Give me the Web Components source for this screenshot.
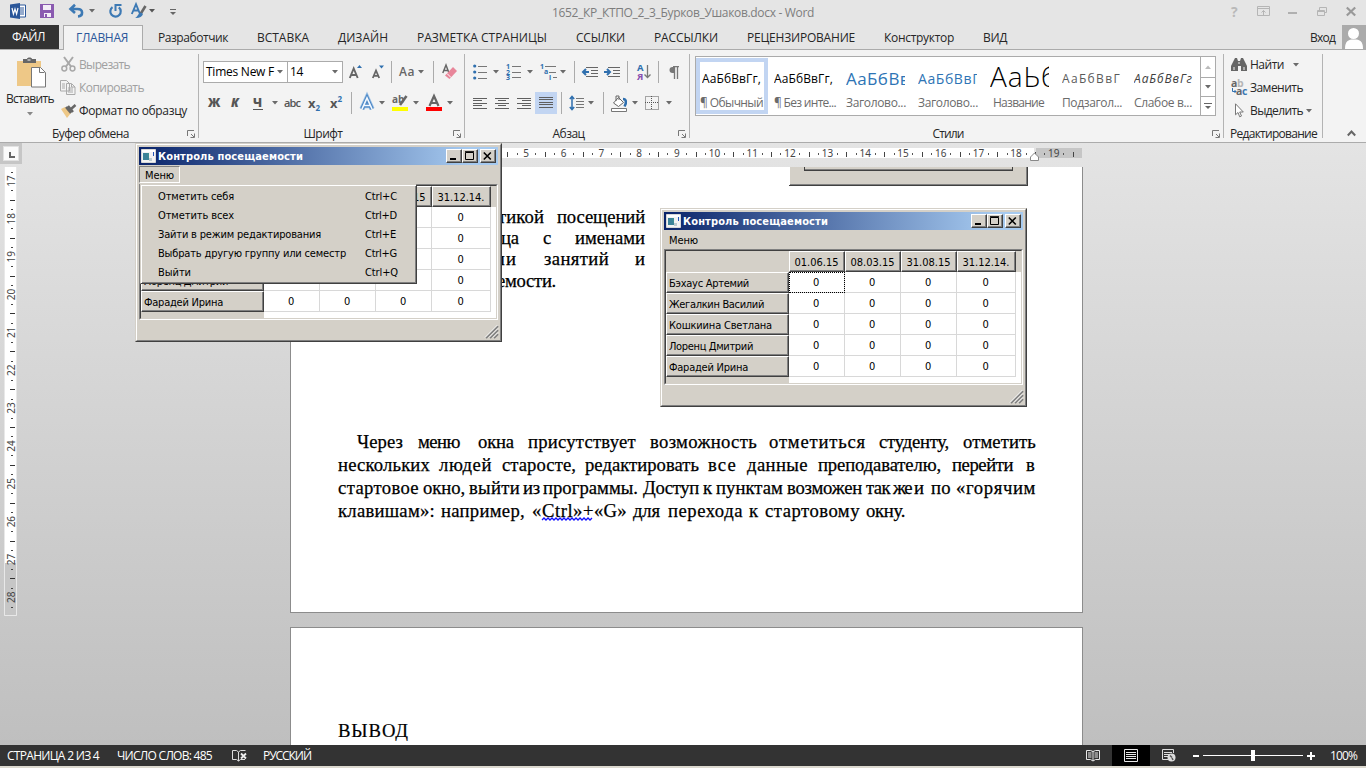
<!DOCTYPE html>
<html lang="ru">
<head>
<meta charset="utf-8">
<title>Word</title>
<style>
html,body{margin:0;height:100%;overflow:hidden}
body{font-family:"Open Sans","Noto Sans",sans-serif;font-size:12px;color:#262626}
</style>
</head>
<body>
<word-app></word-app>
<script>
const define=(name,css,html,after)=>customElements.define(name,class extends HTMLElement{
  connectedCallback(){
    if(this.shadowRoot)return;
    const root=this.attachShadow({mode:'open'});
    root.innerHTML=`<style>*{box-sizing:border-box}svg{display:block;overflow:visible}${css}</style>${typeof html==='function'?html(this):html}`;
    if(after)after(this,root);
  }
});

/* text spread over a given width by letter spacing */
define('fit-text',`:host{display:block;white-space:pre;line-height:16px;flex:none}span{display:inline-block}`,
  '<span><slot></slot></span>',
  (el,root)=>{
    const w=+el.getAttribute('w'),s=root.querySelector('span');
    const nat=s.getBoundingClientRect().width,n=el.textContent.length;
    el.style.width=w+'px';
    if(n)s.style.letterSpacing=((w-nat)/n).toFixed(3)+'px';
  });
const T=(t,w,css='')=>`<fit-text w="${w}" style="${css}">${t}</fit-text>`;

/* one row of items: [start, width, markup], gaps become margins */
const row=(x0,h,items,css='')=>{
  let x=x0,out='';
  for(const [s,w,m] of items){out+=`<div style="flex:none;margin-left:${s-x}px;width:${w}px">${m}</div>`;x=s+w;}
  return `<div style="display:flex;align-items:center;height:${h}px;${css}">${out}</div>`;
};
const svg=(w,h,b)=>`<svg width="${w}" height="${h}" viewBox="0 0 ${w} ${h}" fill="none">${b}</svg>`;
const arr=(c='#6a6a6a')=>svg(6,4,`<path d="M0 0h6L3 3.5z" fill="${c}"/>`);
const sep=svg(1,22,'<path d="M.5 0v22" stroke="#ababab"/>');
const launcher=svg(8,8,'<path d="M.5 6V.5H7M4 4l3 3M7.500 3.500v4h-4" stroke="#777"/>');

/* title bar */
define('word-titlebar',`:host{display:block;height:25px;background:#e5e5e5}.u{margin-top:-3px}`,()=>row(0,25,[
 [10,16,`<div class="u">${svg(16,16,'<path d="M8 2h7.500v12H8" fill="#fff" stroke="#2b579a"/><path d="M10 5h4M10 7h4M10 9h4M10 11h4" stroke="#2b579a"/><path d="M0 1.500L10 0v16L0 14.500z" fill="#2b579a"/><path d="M2 5l1.400 6L5 6l1.600 5L8 5" stroke="#fff" stroke-width="1.200"/>')}</div>`],
 [40,14,`<div class="u">${svg(14,14,'<path d="M0 0h14v14H0z" fill="#8a5ab0"/><path d="M3 1h8v5H3zM4 9h7v4H4z" fill="#f3edf7"/><path d="M5 10h2v3H5z" fill="#8a5ab0"/>')}</div>`],
 [69,15,`<div class="u">${svg(15,14,'<path d="M6 .8L1.500 5l4.500 4M2 5h6.500c6 0 6 7 .5 7.500" stroke="#3c79b4" stroke-width="2.600"/>')}</div>`],
 [89,6,`<div class="u">${arr()}</div>`],
 [109,13,`<div class="u">${svg(13,14,'<path d="M3.500 3.200A5.200 5.200 0 1 0 9.800 3.400" stroke="#3c79b4" stroke-width="2.200"/><path d="M6.500 7V1h6" stroke="#3c79b4" stroke-width="2"/>')}</div>`],
 [131,16,`<div class="u">${svg(16,16,'<path d="M.8 11L5 1.200 9 11M2.500 7.500h5" stroke="#3c79b4" stroke-width="1.900"/><path d="M14.500 3l-5 8" stroke="#666" stroke-width="2.600"/><path d="M10 9.500l2 1.500c-1 3-4 4.500-8 4 3-1 2.500-4.500 6-5.500z" fill="#3c79b4"/>')}</div>`],
 [149,6,`<div class="u">${arr('#555')}</div>`],
 [170,6,svg(6,7,'<path d="M0 .5h6" stroke="#666"/><path d="M0 3h6L3 6z" fill="#666"/>')],
 [552,262,T('1652_КР_КТПО_2_3_Бурков_Ушаков.docx - Word',262,'color:#7d7d7d;margin-top:1px')],
 [1231,8,'<b style="display:block;margin-top:-2px;color:#b9b9b9;font:bold 14px/14px Open Sans">?</b>'],
 [1257,13,`<div class="u">${svg(13,10,'<path d="M.5.500h12v9H.5zM.5 2.500h12M6.500 9V4.500M4.500 6.500l2-2 2 2" stroke="#b5b5b5"/>')}</div>`],
 [1288,9,svg(9,4,'<path d="M0 2h9" stroke="#b0b0b0" stroke-width="2"/>')],
 [1317,10,`<div class="u">${svg(10,9,'<path d="M2.500 3V.500h7v5H7.500M.5 3.500h7v5h-7zM.5 4.500h7" stroke="#b5b5b5"/>')}</div>`],
 [1346,10,`<div class="u">${svg(10,9,'<path d="M.8.500l8.400 8M9.200.500L.8 8.500" stroke="#999" stroke-width="2.200"/>')}</div>`]
]));

/* ribbon tabs */
define('word-tabs',`:host{display:block;height:25px;background:#e5e5e5;box-shadow:inset 0 -1px #ababab}
.f{background:#333;color:#fff;height:24px;padding:4px 0 0 12px}
.a{background:#f3f3f3;border:1px solid #ababab;border-bottom:0;height:25px;padding:4px 0 0 12px;color:#2b579a}
.p{background:#ababab;height:24px;overflow:hidden}.t{padding-top:5px}`,()=>row(0,25,[
 [0,59,`<div class="f">${T('ФАЙЛ',33)}</div>`],
 [63,80,`<div class="a">${T('ГЛАВНАЯ',52)}</div>`],
 ...[[158,70,'Разработчик'],[257,52,'ВСТАВКА'],[338,50,'ДИЗАЙН'],[417,130,'РАЗМЕТКА СТРАНИЦЫ'],[576,49,'ССЫЛКИ'],[654,64,'РАССЫЛКИ'],
 [747,108,'РЕЦЕНЗИРОВАНИЕ'],[884,70,'Конструктор'],[983,24,'ВИД'],[1310,25,'Вход']].map(([x,w,t])=>[x,w,`<div class="t">${T(t,w)}</div>`]),
 [1342,24,`<div class="p">${svg(24,24,'<circle cx="11.500" cy="8.500" r="5.500" fill="#fff"/><path d="M3 24c0-8 3-9.500 9-9.500s9 1.500 9 9.500z" fill="#fff"/>')}</div>`]
],'align-items:flex-start'));

/* ribbon group with a caption and a divider */
define('ribbon-group',`:host{display:flex;flex-direction:column;flex:none;height:92px;position:relative;width:var(--w)}
:host::after{content:"";position:absolute;right:0;top:4px;height:84px;width:1px;background:#b3b3b3}
.b{height:75px}.c{display:flex;align-items:center;justify-content:center;height:17px;position:relative;padding-right:18px}
:host([wide]) .c{padding:0}
.l{position:absolute;right:4px;top:5px}`,
 el=>`<div class="b"><slot></slot></div><div class="c">${T(el.getAttribute('label'),el.getAttribute('lw'))}${el.hasAttribute('dlg')?`<div class="l">${launcher}</div>`:''}</div>`);

/* clipboard */
define('clipboard-tools',`:host{display:flex}.big{width:60px;display:flex;flex-direction:column;align-items:center}.s{flex:1;padding-top:3px}`,()=>`
<div class="big"><div style="height:7px"></div>${svg(30,31,'<path d="M2 4h24v25H2z" fill="#eec887"/><path d="M8 6V2h4c0-2 5-2 5 0h4v4z" fill="#666"/><path d="M12.500 3h3" stroke="#fff"/><path d="M16.500 10.500h9l5 5v14.500h-14z" fill="#fff" stroke="#777"/><path d="M24.500 10.500v5h5" stroke="#777"/>')}
<div style="height:3px"></div>${T('Вставить',48)}<div style="height:5px"></div>${arr('#888')}</div>
<div class="s">
${row(60,23,[[61,15,svg(15,15,'<path d="M3 0l7 9.500M12 0L5 9.500" stroke="#a8a8a8" stroke-width="2"/><circle cx="3.300" cy="11.500" r="2.400" stroke="#a8a8a8" stroke-width="1.500"/><circle cx="11.500" cy="11.500" r="2.400" stroke="#a8a8a8" stroke-width="1.500"/>')],[79,51,T('Вырезать',51,'color:#a0a0a0')]])}
${row(60,23,[[60,16,svg(16,15,'<path d="M.5.500h6l3 3V11h-9zM6.500 3.500h5l3.500 3.500v7.500H6.500z" fill="#f3f3f3" stroke="#aaa"/><path d="M2 4h3M2 6h3M2 8h3M8 8h5M8 10h5M8 12h5M11.500 4v3H15" stroke="#aaa"/>')],[79,65,T('Копировать',65,'color:#a0a0a0')]])}
${row(60,23,[[60,17,svg(17,14,'<path d="M1 5l4-2 6 6-4 5z" fill="#eec887"/><path d="M6 3l5 6M8 2l5 6" stroke="#666" stroke-width="2.500"/><path d="M11 5l4.500-4" stroke="#666" stroke-width="2.500"/>')],[79,108,T('Формат по образцу',108)]])}
</div>`);

/* font */
define('font-tools',`:host{display:block;padding-top:11px}.c{height:22px;border:1px solid #ababab;background:#fff;display:flex;align-items:center;justify-content:space-between;padding:0 4px 0 2px;color:#000}
.g{font-weight:bold;color:#555;line-height:18px;font-size:13px}`,()=>
row(199,22,[
 [203,85,`<div class="c">${T('Times New F',68)}${arr()}</div>`],
 [287,56,`<div class="c">${T('14',13)}${arr()}</div>`],
 [349,14,svg(14,14,'<path d="M.8 13L4.700 3.500l4 9.500M2 10h5.500" stroke="#666" stroke-width="1.900"/><path d="M8 3h5l-2.500-3z" fill="#2f6fae"/>')],
 [372,13,svg(13,14,'<path d="M.8 13L4 5.500 7.200 13M2 10.800h4" stroke="#666" stroke-width="1.800"/><path d="M7 .5h5L9.500 3.500z" fill="#2f6fae"/>')],
 [391,1,sep],[399,16,T('Aa',16,'color:#666;font-weight:600')],[418,6,arr()],[433,1,sep],
 [442,16,svg(16,16,'<path d="M.8 9L4 1l3 8M2 6.500h3.500" stroke="#666" stroke-width="1.500"/><path d="M3 11.500L11 3l4 4-7.500 8z" fill="#e8869a"/><path d="M5 9.500l4 4" stroke="#fff"/>')]
])+'<div style="height:9px"></div>'+row(199,22,[
 [208,13,T('Ж',13,'font-weight:800;color:#555')],[231,9,T('К',9,'font-weight:800;font-style:italic;color:#555')],
 [253,10,T('Ч',10,'font-weight:800;color:#555;border-bottom:1px solid #555;line-height:13px')],[272,5,arr()],
 [284,16,T('abc',16,'font-weight:600;color:#555;text-decoration:line-through;font-size:11px')],
 [308,14,'<span class="g">x</span><span style="color:#2f6fae;font:bold 8px/8px Open Sans;vertical-align:-3px">2</span>'],
 [330,14,'<span class="g">x</span><span style="color:#2f6fae;font:bold 8px/8px Open Sans;vertical-align:6px">2</span>'],
 [351,1,sep],
 [360,14,svg(14,15,'<path d="M2 13L7 2l5 11M4 9.500h6" stroke="#9cc0e4" stroke-width="5.400"/><path d="M2 13L7 2l5 11M4 9.500h6" stroke="#4a86c5" stroke-width="3.800"/><path d="M2 13L7 2l5 11M4 9.500h6" stroke="#f2f8ff" stroke-width="1.700"/>')],[379,5,arr()],
 [392,17,svg(17,18,'<text x="0" y="9" font-family="Open Sans" font-size="10" font-weight="700" fill="#666">ab</text><path d="M14.500 2L8 11" stroke="#666" stroke-width="2.600"/><path d="M0 13h16v4H0z" fill="#ff0"/>')],[413,6,arr()],
 [426,16,svg(16,18,'<path d="M3.500 12L8 2l4.500 10M5 9h6" stroke="#666" stroke-width="2.200"/><path d="M0 13h16v4H0z" fill="#f00"/>')],[447,6,arr()]
]));

const al=a=>svg(14,13,a.map(([x,w],i)=>`<rect x="${x}" y="${i*2.5+1|0}" width="${w}" height="1" fill="#5f5f5f"/>`).join(''));
const ind=d=>svg(16,11,`<path d="M4 .5h12M9 3.500h7M9 6.500h7M4 9.500h12" stroke="#666"/><path d="${d?'M0 5h6M3 2l3 3-3 3':'M7 5H1M4 2L1 5l3 3'}" stroke="#2f6fae" stroke-width="2"/>`);
define('paragraph-tools',`:host{display:block;padding-top:11px}.j{background:#c2d5f2;height:22px;padding:4px 4px}`,()=>
row(465,22,[
 [473,14,svg(14,16,'<g fill="#2f6fae"><circle cx="1.700" cy="2" r="1.600"/><circle cx="1.700" cy="8" r="1.600"/><circle cx="1.700" cy="14" r="1.600"/></g><path d="M5 2.500h9M5 8.500h9M5 14.500h9" stroke="#777"/>')],[493,6,arr()],
 [506,15,svg(15,16,'<g fill="#2f6fae" font-family="Open Sans" font-size="7" font-weight="700"><text x="0" y="5">1</text><text x="0" y="10.500">2</text><text x="0" y="16">3</text></g><path d="M6 2.500h9M6 8.500h9M6 13.500h9" stroke="#777"/>')],[527,6,arr()],
 [540,17,svg(17,16,'<g fill="#2f6fae" font-family="Open Sans" font-size="7" font-weight="700"><text x="0" y="5">1</text><text x="4" y="10">a</text><text x="9" y="16">i</text></g><path d="M5 2.500h11M9 8.500h7M13 13.500h4" stroke="#777"/>')],[560,6,arr()],
 [574,1,sep],[582,16,ind(0)],[604,16,ind(1)],[627,1,sep],
 [637,14,svg(14,16,'<g font-family="Open Sans" font-size="9.500" font-weight="700"><text x="0" y="7" fill="#2f6fae">А</text><text x="0" y="15.500" fill="#8a4fb0">Я</text></g><path d="M10.500 1v12M7.500 10.500l3 3 3-3" stroke="#777" stroke-width="1.300"/>')],
 [658,1,sep],[669,10,svg(10,13,'<path d="M5 1H3.500a3 3 0 0 0 0 6H5z" fill="#777"/><path d="M5.500 13V.7M8.500 13V.7M4 .7h6" stroke="#777" stroke-width="1.300"/>')]
])+'<div style="height:9px"></div>'+row(465,22,[
 [473,14,al([[0,14],[0,9],[0,14],[0,9],[0,14]].slice(0,5))],
 [495,14,al([[0,14],[3,8],[0,14],[3,8],[0,14]])],
 [517,14,al([[0,14],[5,9],[0,14],[5,9],[0,14]])],
 [535,22,`<div class="j">${al([[0,14],[0,14],[0,14],[0,14],[0,14]])}</div>`],
 [561,1,sep],
 [569,15,svg(15,16,'<path d="M3 1v14M.8 4L3 1.500 5.200 4M.8 12L3 14.500 5.200 12" stroke="#2f6fae" stroke-width="1.500"/><path d="M7 3.500h8M7 6.500h8M7 9.500h8M7 12.500h8" stroke="#777"/>')],[588,6,arr()],
 [603,1,sep],
 [611,17,svg(17,17,'<path d="M2.500 8l5-5.500 5 5-5 4z" fill="#fff" stroke="#666"/><path d="M5 6V1h3v4" stroke="#666"/><path d="M12 4c3 0 4 3 1.500 7.500" stroke="#2f6fae" stroke-width="2.500"/><path d="M.5 13.500h15v3H.5z" fill="#fff" stroke="#777"/>')],[632,6,arr()],
 [645,14,svg(14,14,'<path d="M.5.500h13v13H.5zM6.500 0v14M0 6.500h14" stroke="#555" stroke-dasharray="1 1"/>')],[666,6,arr()]
]));

/* style gallery */
const styles=[
 ['АаБбВвГг,','font-size:12px;color:#000',59,'¶ Обычный',63],
 ['АаБбВвГг,','font-size:12px;color:#000',59,'¶ Без инте...',62],
 ['АаБбВв','font-size:17px;color:#2e74b5',64,'Заголово...',60],
 ['АаБбВвГ','font-size:14px;color:#2e74b5',62,'Заголово...',60],
 ['АаЬб','font:300 28px/30px Open Sans;color:#000;margin-top:-7px',68,'Название',51],
 ['АаБбВвГ','font-size:12px;color:#5a5a5a',59,'Подзагол...',60],
 ['АаБбВвГг','font-size:12px;font-style:italic;color:#404040',59,'Слабое в...',58]];
define('style-gallery',`:host{display:flex;margin:6px 0 0 5px;width:521px;height:60px;background:#fff;border:1px solid #ababab}
.i{width:72px;height:56px;margin-top:1px;padding:5px 0 0 6px;flex:none}.i.s{border:4px solid #c2d5f2;padding:1px 0 0 2px}
.t{width:59px;height:32px;overflow:hidden;display:flex;align-items:center}.n{color:#6b6b6b;height:18px}
.u{margin-left:auto;width:15px;border-left:1px solid #ababab;display:grid;grid-template-rows:20px 19px 1fr}.u div{display:grid;place-items:center}.u div+div{border-top:1px solid #ababab}`,
()=>styles.map(([s,c,w,n,nw],i)=>`<div class="i${i?'':' s'}"><div class="t">${T(s,w,c)}</div><div class="n" style="${i==4?'padding-left:3px':i?'':'margin-left:-2px'}">${T(n,nw)}</div></div>`).join('')+
`<div class="u"><div>${svg(6,4,'<path d="M0 4h6L3 .5z" fill="#bbb"/>')}</div><div>${arr()}</div><div>${svg(8,7,'<path d="M0 .5h8" stroke="#666"/><path d="M1 3h6L4 6z" fill="#666"/>')}</div></div>`);

define('edit-tools',`:host{display:block;padding-top:3px}`,()=>
row(1224,23,[[1231,16,svg(16,13,'<path d="M2 4l2-4h2l1 3h2l1-3h2l2 4 2 4v5h-6V8H7v5H0V8z" fill="#666"/><path d="M3 9v3M13 9v3M8 4v2" stroke="#f3f3f3"/>')],[1250,34,T('Найти',34)],[1293,6,arr()]])+
row(1224,23,[[1231,17,svg(17,17,'<g font-family="Open Sans" font-size="10.500" font-weight="700"><text x="0" y="7.500" fill="#666">a</text><text x="6" y="7.500" fill="#b5b5b5">b</text><text x="5" y="16" fill="#666">a</text><text x="11" y="16" fill="#3c79b4">c</text></g><path d="M1.500 9v3.500H5M3.500 11L5 12.500 3.500 14" stroke="#2f6fae"/>')],[1250,53,T('Заменить',53)]])+
row(1224,23,[[1235,9,svg(9,15,'<path d="M.5.800v11l2.500-2.300 1.700 4.300 1.800-.8-1.800-4H8.300z" fill="#fff" stroke="#777"/>')],[1250,53,T('Выделить',53)],[1306,5,arr()]]));

define('word-ribbon',`:host{display:flex;height:93px;background:#f3f3f3;border-bottom:1px solid #ababab;box-sizing:border-box}.x{margin:80px 0 0 24px}`,
`<ribbon-group label="Буфер обмена" lw="77" dlg style="--w:199px"><clipboard-tools></clipboard-tools></ribbon-group>
<ribbon-group label="Шрифт" lw="39" dlg style="--w:266px"><font-tools></font-tools></ribbon-group>
<ribbon-group label="Абзац" lw="32" dlg style="--w:225px"><paragraph-tools></paragraph-tools></ribbon-group>
<ribbon-group label="Стили" lw="31" dlg style="--w:534px"><style-gallery></style-gallery></ribbon-group>
<ribbon-group wide label="Редактирование" lw="87" style="--w:99px"><edit-tools></edit-tools></ribbon-group>
<div class="x">${svg(9,7,'<path d="M.8 5.500l3.700-4 3.700 4" stroke="#666" stroke-width="2"/>')}</div>`);

/* rulers, one centimetre = 37.75 px */
define('h-ruler',`:host{display:block}text{font:10px "Noto Sans",sans-serif;fill:#444}`,()=>{
 let o='';
 for(let n=0;n<20;n++){const x=n*37.7-.5;if(n)o+=`<text x="${x}" y="9" text-anchor="middle">${n}</text>`;
  for(const q of [.25,.75]){const p=Math.round(x+q*37.7);if(p<744)o+=`<rect x="${p}" y="5" width="1" height="2" fill="#555"/>`;}
  const m=Math.round(x+18.85);if(m<744)o+=`<rect x="${m}" y="4" width="1" height="5" fill="#444"/>`;}
 return svg(744,16,'<path d="M0 0h696v10H0z" fill="#fff"/><path d="M698 0h46v10h-46z" fill="#c6c6c6"/>'+o+'<path d="M692.500 12.500V9l4-4 4 4v3.500z" fill="#fff" stroke="#888"/>');
});
define('v-ruler',`:host{display:block}text{font:10px "Noto Sans",sans-serif;fill:#444}`,()=>{
 let o='';
 for(let n=17;n<29;n++){const y=14+(n-17)*37.85;o+=`<text transform="translate(11 ${y}) rotate(-90)" text-anchor="middle">${n}</text>`;
  for(const q of [-.25,.25])o+=`<rect x="7" y="${Math.round(y+q*37.85)}" width="2" height="1" fill="#444"/>`;
  if(n<28)o+=`<rect x="6" y="${Math.round(y+18.900)}" width="5" height="1" fill="#333"/>`;}
 return svg(13,449,'<path d="M.5 0v448.500h12V0" fill="#fff" stroke="#e8e8e8"/><path d="M1 396h11v52H1z" fill="#c6c6c6"/>'+o);
});

/* attendance window */
const names=['Бэхаус Артемий','Жегалкин Василий','Кошкиина Светлана','Лоренц Дмитрий','Фарадей Ирина'];
const nw=[80,95,103,84,79];
const dates=[['01.06.15',44,56],['08.03.15',44,56],['31.08.15',44,56],['31.12.14.',47,59]];
define('attendance-window',`:host{display:block;box-sizing:border-box;width:367px;height:199px;background:#d4d0c8;border:1px solid;border-color:#d4d0c8 #404040 #404040 #d4d0c8;color:#000;font:11px "DejaVu Sans Condensed","DejaVu Sans",sans-serif;font-stretch:condensed;position:relative}
.in{height:197px;border:1px solid;border-color:#fff #808080 #808080 #fff;padding:2px;display:flex;flex-direction:column}
.t{height:18px;flex:none;display:flex;align-items:center;background:linear-gradient(90deg,#0a246a,#a6caf0 92%);color:#fff;font-weight:bold;padding:0 2px}
.t fit-text{margin:1px 0 0 2px}.w{margin-left:auto;display:flex}
.b{width:16px;height:14px;background:#d4d0c8;border:1px solid;border-color:#fff #404040 #404040 #fff;box-shadow:inset -1px -1px #808080;display:grid;place-items:center}.b:last-child{margin-left:2px}
.b svg{margin:-1px 0 0 -1px}
.m{height:19px;flex:none;display:flex;padding:1px 0 0 1px}.m div{width:41px;height:17px;padding:2px 0 0 4px}
:host([open]) .m{padding-left:0}:host([open]) .m div{border:1px solid;border-color:#808080 #fff #fff #808080;padding:1px 0 0 5px}
.f{height:136px;flex:none;border:1px solid;border-color:#808080 #fff #fff #808080;}
.g{height:134px;border:1px solid;border-color:#404040 #d4d0c8 #d4d0c8 #404040;display:grid;grid-template-columns:123px 56px 56px 56px 59px 1fr;grid-template-rows:21px 21px 21px 21px 21px 21px 1fr}
.g>div{display:flex;align-items:center;justify-content:center;padding:2px 1px 0 0}
.h{background:#d4d0c8;border:1px solid;border-color:#fff #404040 #404040 #fff;box-shadow:inset -1px -1px #808080}
.g>.n{justify-content:flex-start;padding-left:2px}.c{background:#fff;border-right:1px solid #d8d8d8;border-bottom:1px solid #d8d8d8}
.g>.e{background:#fff}.sel{outline:1px dotted #000;outline-offset:-1px}
.s{flex:1;display:flex;justify-content:flex-end;align-items:flex-end}`,
 el=>{
 const open=el.hasAttribute('open');
 /* rows and columns lying wholly beneath the open menu stay blank */
 const C=(t,w,covered)=>open&&covered?'':T(t,w);
 return `<div class="in"><div class="t">${svg(15,14,'<path d="M.5.500h14v13H.5z" fill="#f3f3f3" stroke="#d8d8d8"/><path d="M1 1h13v2H1z" fill="#fff"/><path d="M2 4h6v7H2z" fill="#3f8f93"/><path d="M2 4h4l2 7H2z" fill="#3a78a0" opacity=".5"/><path d="M8 9h3v3H8z" fill="#bccbd0"/><path d="M12.500 3v4" stroke="#2456b8"/>')}${T('Контроль посещаемости',145)}
<div class="w"><div class="b">${svg(9,9,'<path d="M1 7h6v2H1z" fill="#000"/>')}</div><div class="b">${svg(9,9,'<path d="M.5 1.500h8v7h-8zM0 .7h9" stroke="#000"/>')}</div><div class="b">${svg(9,8,'<path d="M.8.500l7 7M7.800.500l-7 7" stroke="#000" stroke-width="1.600"/>')}</div></div></div>
<div class="m"><div>${T('Меню',29)}</div></div>
<div class="f"><div class="g"><div></div>${dates.map((d,k)=>`<div class="h">${C(d[0],d[1],k<2)}</div>`).join('')}<div></div>
${names.map((n,i)=>`<div class="h n">${C(n,nw[i],i<3)}</div>${[0,1,2,3].map(k=>`<div class="c${!i&&!k?' sel':''}">${C('0',6,i<3&&k<3)}</div>`).join('')}<div class="e"></div>`).join('')}
<div></div><div class="e" style="grid-column:2/7"></div></div></div>
<div class="s">${svg(13,13,'<path d="M1 13L13 1M5 13l8-8M9 13l4-4" stroke="#808080" stroke-width="1.800"/><path d="M0 12.500L12.500 0M4 12.500L13 3.500M8 12.500l5-5" stroke="#fff"/>')}</div></div><slot></slot>`});

const menu=[['Отметить себя',76,'Ctrl+C',32],['Отметить всех',76,'Ctrl+D',32],['Зайти в режим редактирования',163,'Ctrl+E',31],['Выбрать другую группу или семестр',188,'Ctrl+G',32],['Выйти',33,'Ctrl+Q',33]];
define('popup-menu',`:host{display:block;box-sizing:border-box;width:277px;height:100px;background:#d4d0c8;border:1px solid;border-color:#d4d0c8 #404040 #404040 #d4d0c8;box-shadow:inset 1px 1px #fff,inset -1px -1px #808080;padding-top:2px}
div{display:flex;height:19px;align-items:center;padding-left:17px}.k{margin-left:auto;width:51px}`,
 ()=>menu.map(([a,w,k,kw])=>`<div>${T(a,w)}<span class="k">${T(k,kw)}</span></div>`).join(''));

/* document line: words as [start, end, text] */
const line=(x0,h,ws)=>`<p style="height:${h}px;line-height:${h}px">${ws.map(([a,b,t],i)=>{const s=T(t,b-a,`line-height:${h}px`);return `<span style="margin-left:${a-(i?ws[i-1][1]:x0)}px">${s}</span>`}).join(' ')}</p>`;
define('doc-pages',`:host{display:block;width:793px;font:18.670px "Liberation Serif",serif;color:#000}
p{display:flex;margin:0;-webkit-text-stroke:.25px #000}.pg{background:#fff;border:1px solid #8c8c8c}
.a{height:446px;border-top:0}.b{height:118px;margin-top:14px;border-bottom:0;padding:92px 0 0 47px;overflow:hidden}
.top{display:flex;height:262.500px}.l{width:370px;padding-top:38.500px}
.cut{margin-left:128px;width:239px;height:19px;background:#d4d0c8;border:solid #404040;border-width:0 1px 1px 0;box-shadow:inset 1px 0 #fff,inset -1px -1px #808080;padding-left:15px}
.cut i{display:block;width:209px;height:4px;border:solid #404040;border-width:0 1px 1px;box-shadow:inset 0 -1px #808080}`,
()=>`<div class="pg a"><div class="top"><div class="l">
${line(291,21.4,[[498,544,'тикой'],[557,645,'посещений']])}
${line(291,21.4,[[501,519,'ца'],[543,551,'с'],[575,645,'именами']])}
${line(291,21.4,[[493,517,'ми'],[544,609,'занятий'],[635,645,'и']])}
${line(291,21.4,[[497,556,'емости.']])}
</div><div><div class="cut"><i></i></div><div style="height:22px"></div><attendance-window style="margin-left:-1px"></attendance-window></div></div>
${line(291,23.2,[[357,403,'Через'],[418,460,'меню'],[478,514,'окна'],[528,636,'присутствует'],[650,757,'возможность'],[769,866,'отметиться'],[879,949,'студенту,'],[963,1036,'отметить']])}
${line(291,23.2,[[338,430,'нескольких'],[439,492,'людей'],[502,576,'старосте,'],[585,699,'редактировать'],[708,737,'все'],[747,808,'данные'],[818,941,'преподавателю,'],[952,1013,'перейти'],[1026,1036,'в']])}
${line(291,23.2,[[338,419,'стартовое'],[423,465,'окно,'],[469,520,'выйти'],[523,540,'из'],[543,638,'программы.'],[643,699,'Доступ'],[703,712,'к'],[716,783,'пунктам'],[787,862,'возможен'],[866,890,'так'],[893,911,'же'],[914,924,'и'],[931,951,'по'],[956,1036,'«горячим']])}
${line(291,23.2,[[338,435,'клавишам»:'],[441,525,'например,'],[532,542,'«'],[542,594,'Ctrl»+'],[594,627,'«G»'],[633,660,'для'],[668,743,'перехода'],[749,759,'к'],[765,860,'стартовому'],[866,905,'окну.']])}
<svg width="54" height="4" style="margin:-5px 0 0 251px"><path d="M0 3l2-2 2 2 2-2 2 2 2-2 2 2 2-2 2 2 2-2 2 2 2-2 2 2 2-2 2 2 2-2 2 2 2-2 2 2 2-2 2 2 2-2 2 2 2-2 2 2 2-2" fill="none" stroke="#11f" stroke-width="1.300"/></svg>
</div><div class="pg b">${T('ВЫВОД',71,'line-height:22px;-webkit-text-stroke:.2px #000')}</div>`);

define('word-workspace',`:host{display:flex;flex-direction:column;height:602px;overflow:hidden;background:linear-gradient(#e4e4e4,#bfbfbf)}
.r{display:flex;height:24px;flex:none}.c{width:22px;height:21px;background:#c6c6c6;padding:3px}.c div{width:16px;height:15px;background:#fbfbfb;border:1px solid #e2e2e2;padding:5px 0 0 5px}
h-ruler{margin:5px 0 0 316px}.d{display:flex}v-ruler{margin-left:4px}doc-pages{margin-left:273px}`,
`<div class="r"><div class="c"><div>${svg(6,6,'<path d="M1 0v5h5" stroke="#666" stroke-width="2"/>')}</div></div><h-ruler></h-ruler></div>
<div class="d"><v-ruler></v-ruler><doc-pages></doc-pages></div>`);

define('word-status',`:host{display:block;height:21px;background:#333;color:#fff}.on{background:#000;height:21px;display:grid;place-items:center}`,()=>row(0,21,[
 [7,92,T('СТРАНИЦА 2 ИЗ 4',92)],[117,95,T('ЧИСЛО СЛОВ: 485',95)],
 [232,15,svg(15,13,'<path d="M.5 1.500h4l2 1.500 2-1.500h5M.5 1.500v9h4l2 1.500v-9M6.500 12l2-1.500H13" stroke="#ddd"/><path d="M9 4.500l5 5M14 4.500l-5 5" stroke="#eee" stroke-width="1.800"/>')],
 [263,48,T('РУССКИЙ',48)],
 [1086,14,svg(14,13,'<path d="M.5 1.500h4l2.500 1 2.500-1h4v9h-4L7 12l-2.500-1.500h-4zM7 2v10M2 4h3.500M2 6h3.500M2 8h3.500M8.500 4H12M8.500 6H12M8.500 8H12" stroke="#e8e8e8"/>')],
 [1112,38,`<div class="on">${svg(14,13,'<path d="M.5.500h13v12H.5zM2 3.500h10M2 5.500h10M2 7.500h10M2 9.500h10" stroke="#e8e8e8"/>')}</div>`],
 [1162,14,svg(14,13,'<path d="M6 10.500H.500V.500h11V4M2 3.500h8M2 5.500h6M2 7.500h4" stroke="#ddd"/><circle cx="9.500" cy="8.500" r="4" fill="#ddd"/><path d="M8 6.500l2 2M10 9l1 2" stroke="#555" stroke-width="1.500"/>')],
 [1193,6,svg(6,2,'<path d="M0 0h6v2H0z" fill="#fff"/>')],
 [1203,100,svg(100,11,'<path d="M0 5h100v1H0zM48 0h4v11h-4z" fill="#fff"/>')],
 [1307,8,svg(8,8,'<path d="M0 3h8v2H0zM3 0h2v8H3z" fill="#fff"/>')],
 [1330,27,T('100%',27)]
]));

define('word-app',`:host{display:flex;flex-direction:column;width:1366px;height:768px;position:relative;background:#dcd9cf;overflow:hidden}
.win{position:absolute;left:135px;top:143px}popup-menu{position:absolute;left:4px;top:40px}`,
`<word-titlebar></word-titlebar><word-tabs></word-tabs><word-ribbon></word-ribbon><word-workspace></word-workspace><word-status></word-status>
<div class="win"><attendance-window open><popup-menu></popup-menu></attendance-window></div>`);
</script>
</body>
</html>
